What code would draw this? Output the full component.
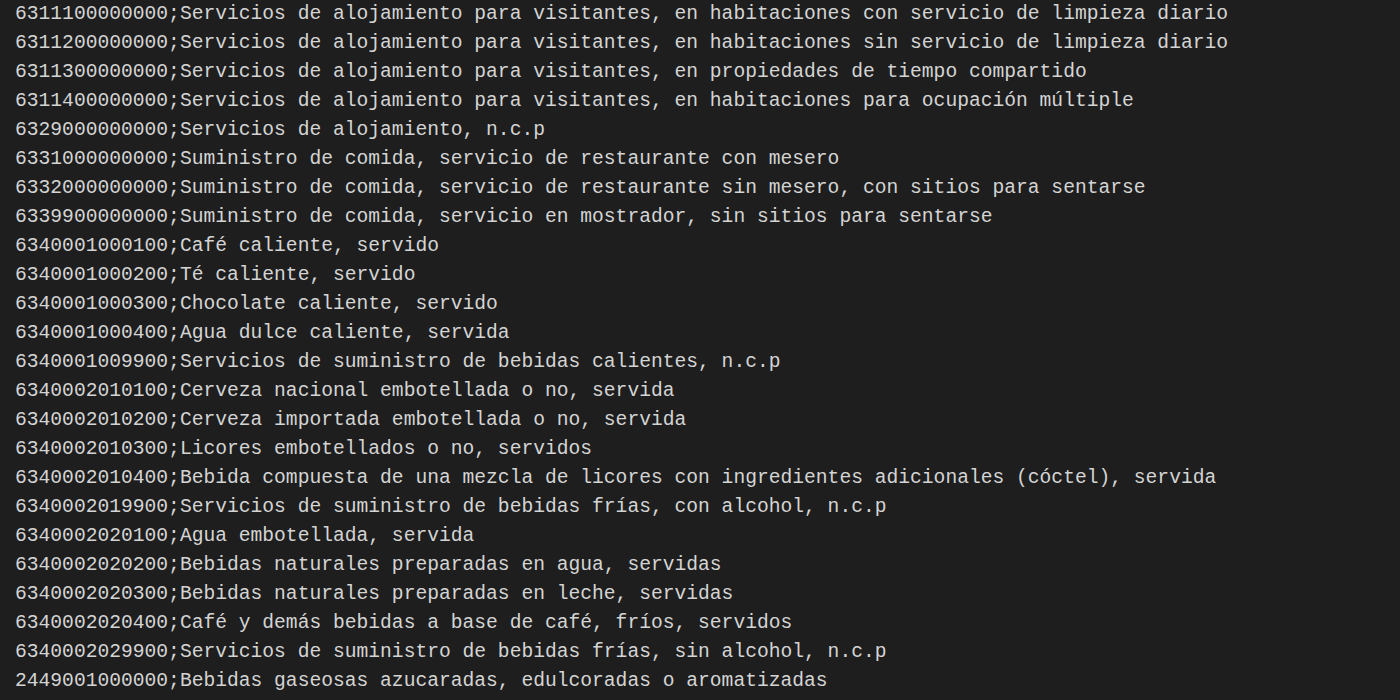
const lines = [
  "6311100000000;Servicios de alojamiento para visitantes, en habitaciones con servicio de limpieza diario",
  "6311200000000;Servicios de alojamiento para visitantes, en habitaciones sin servicio de limpieza diario",
  "6311300000000;Servicios de alojamiento para visitantes, en propiedades de tiempo compartido",
  "6311400000000;Servicios de alojamiento para visitantes, en habitaciones para ocupación múltiple",
  "6329000000000;Servicios de alojamiento, n.c.p",
  "6331000000000;Suministro de comida, servicio de restaurante con mesero",
  "6332000000000;Suministro de comida, servicio de restaurante sin mesero, con sitios para sentarse",
  "6339900000000;Suministro de comida, servicio en mostrador, sin sitios para sentarse",
  "6340001000100;Café caliente, servido",
  "6340001000200;Té caliente, servido",
  "6340001000300;Chocolate caliente, servido",
  "6340001000400;Agua dulce caliente, servida",
  "6340001009900;Servicios de suministro de bebidas calientes, n.c.p",
  "6340002010100;Cerveza nacional embotellada o no, servida",
  "6340002010200;Cerveza importada embotellada o no, servida",
  "6340002010300;Licores embotellados o no, servidos",
  "6340002010400;Bebida compuesta de una mezcla de licores con ingredientes adicionales (cóctel), servida",
  "6340002019900;Servicios de suministro de bebidas frías, con alcohol, n.c.p",
  "6340002020100;Agua embotellada, servida",
  "6340002020200;Bebidas naturales preparadas en agua, servidas",
  "6340002020300;Bebidas naturales preparadas en leche, servidas",
  "6340002020400;Café y demás bebidas a base de café, fríos, servidos",
  "6340002029900;Servicios de suministro de bebidas frías, sin alcohol, n.c.p",
  "2449001000000;Bebidas gaseosas azucaradas, edulcoradas o aromatizadas",
];

export default function App() {
  return (
    <div className="w-[1400px] h-[700px] overflow-hidden bg-[#1e1e1e] text-[#d4d4d4]">
      <div className="pl-[15px] font-['Liberation_Mono',monospace] text-[19.64px] leading-[29px] whitespace-pre">
        {lines.map((l, i) => (
          <div key={i}>{l}</div>
        ))}
      </div>
    </div>
  );
}
